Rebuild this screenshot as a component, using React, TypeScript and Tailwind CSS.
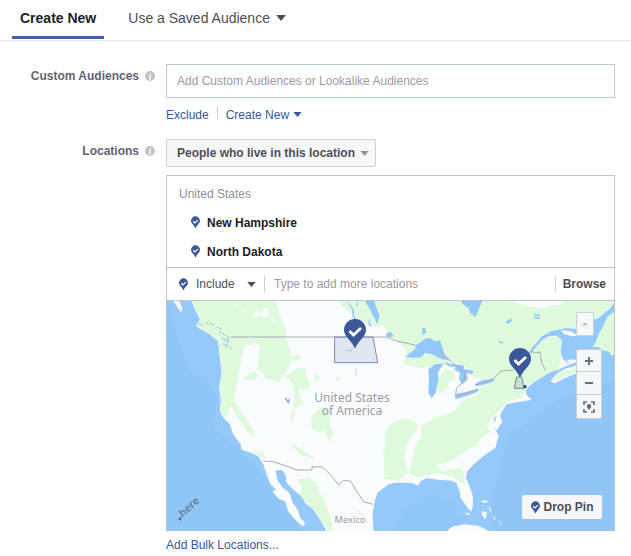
import type { ReactNode } from "react";

const LINK = "text-xs leading-4 text-[#365899]";

function Pin({ className }: { className: string }) {
  return (
    <svg viewBox="0 0 22 30" className={className} aria-hidden="true">
      <PinShape />
    </svg>
  );
}

function PinShape() {
  return (
    <>
      <path d="M11 0a11 11 0 0 1 11 11c0 6.500-6.500 9-11 18.500C6.500 20 0 17.500 0 11A11 11 0 0 1 11 0z" fill="#3b5998" />
      <path d="M5.500 12l4 4 7.500-7" fill="none" stroke="#fff" strokeWidth="2.800" />
    </>
  );
}

function Caret({ className }: { className: string }) {
  return (
    <svg viewBox="0 0 10 6" className={className} aria-hidden="true">
      <path d="M0 0h10L5 6z" fill="currentColor" />
    </svg>
  );
}

function Info() {
  return (
    <svg viewBox="0 0 10 10" className="size-[10px] shrink-0" aria-hidden="true">
      <circle cx="5" cy="5" r="5" fill="#bec3c9" />
      <path d="M5.400 2v1.300M4 4.600h1.200L4.700 7.800h1.100" fill="none" stroke="#fff" strokeWidth="1.200" />
    </svg>
  );
}

function Row({ label, htmlFor, children }: { label: string; htmlFor: string; children: ReactNode }) {
  return (
    <div className="flex gap-[11px]">
      <div className="flex h-6 w-[155px] shrink-0 items-center justify-end gap-[6px]">
        <label htmlFor={htmlFor} className="text-xs font-bold text-[#5f6470]">
          {label}
        </label>
        <Info />
      </div>
      <div className="min-w-0 flex-1">{children}</div>
    </div>
  );
}

/* The map is drawn as two halves; the eastern one has its own origin. */
const EAST = "translate(654 0)";

function MapArt() {
  return (
    <svg
      viewBox="0 0 1341 690"
      preserveAspectRatio="xMidYMid slice"
      className="block h-full w-full"
      role="img"
      aria-label="Map of the United States"
    >
      <rect x="-1500" width="4500" height="690" fill="#94c9fa" />
      <path d="M-1500 0H0L30 100 60 200 120 240 150 290 140 380 210 440 280 510 330 590 390 670 400 690H-1500z" fill="#8fc4f5" opacity=".7" />
      <g transform={EAST}>
        <path d="M30 690L60 620 110 590 160 580 210 610 240 660 250 690z" fill="#8bc1f3" opacity=".35" />
        <path d="M330 690L320 600 350 480 370 400 420 370 530 290 690 240H2000V690z" fill="#8fc4f5" opacity=".8" />
      </g>

      {/* Land */}
      <g fill="#f9fbfd" stroke="#f9fbfd" strokeWidth="3" strokeLinejoin="round">
        <path d="M75 0L88 30 100 55 95 68 88 75 130 100 155 122 160 170 165 215 158 260 163 300 160 330 170 350 190 370 200 400 222 430 225 445 255 455 275 465 290 490 300 520 312 550 330 568 318 572 335 592 355 600 365 630 385 655 408 675 413 665 398 650 392 628 375 605 365 575 345 560 330 535 325 510 345 507 355 520 360 545 385 570 405 585 415 605 440 625 460 655 480 690H618L615 640 622 600 630 575 665 548 690 543V0z" />
        <path d="M20 0L42 32 45 24 36 0z" />
        <g transform={EAST}>
          <path d="M0 0V545L30 543 80 545 100 552 105 540 125 530 160 535 200 538 215 545 225 570 228 590 245 615 258 630 263 610 261 580 250 550 241 530 246 510 270 485 300 460 330 440 335 420 340 405 330 385 325 350 335 345 350 330 365 308 410 300 438 295 425 285 420 270 430 255 450 240 475 225 498 210 520 205 540 195 572 182 545 188 530 170 525 150 530 120 515 105 490 108 470 120 455 135 440 150 435 145 450 128 470 105 500 88 540 80 585 82 600 65 640 50 675 20 690 0z" />
          <path d="M498 240L515 220 540 205 575 195 610 180 600 202 575 215 540 230 508 246z" />
        </g>
      </g>

      {/* Forests */}
      <g fill="#dff9dc">
        <path d="M75 0H325L340 45 355 80 358 110 370 150 372 180 360 210 350 222 335 245 318 236 300 235 286 216 270 205 275 165 278 135 265 125 250 132 235 130 225 160 218 195 215 220 205 270 200 295 225 335 255 380 268 412 240 390 205 340 190 310 185 335 175 350 160 330 163 300 158 260 165 215 160 170 155 122 130 100 88 75 100 55z" />
        <path d="M225 235L260 210 275 225 262 238zM370 165L395 158 403 172 375 180zM355 225L385 205 415 198 418 225 432 255 410 270 395 262 400 290 412 310 385 320 378 362 368 354 380 320 385 275 374 245zM440 213L455 225 458 240 445 238zM508 230L520 226 518 240 508 242z" />
        <path d="M435 345L460 320 490 330 488 372 500 395 485 425 475 388 460 395 432 380zM370 428L400 442 445 475 400 462zM393 535L425 532 450 545 455 570 475 600 490 650 500 690H485L455 650 430 615 400 585 405 560zM565 620L582 637 578 642zM245 448L288 456 300 475 270 460z" />
        <path d="M515 0H690V110L670 100 650 72 625 78 590 65 555 40 530 20z" />
        <path d="M690 355L680 400 650 450 652 535 690 533z" />
        <g transform={EAST}>
          <path d="M0 0H690L675 20 640 50 600 65 585 82 540 80 500 88 470 105 450 128 435 145 440 152 470 122 490 108 515 105 530 120 525 150 530 172 520 203 475 225 430 250 418 275 410 290 365 303 345 325 325 345 305 372 318 392 290 410 270 435 225 462 190 482 150 495 175 510 225 500 236 515 240 550 225 545 200 525 160 515 100 528 72 518 80 480 90 440 107 405 108 375 150 350 210 330 235 300 280 278 285 255 310 240 260 228 240 195 200 178 175 195 110 200 55 190 65 165 60 140 35 122 18 108 0 78z" />
          <path d="M20 365L60 350 95 365 97 385 68 420 58 470 68 515 40 540 0 533V395zM158 230L185 202 205 212 212 235 190 243 188 260 165 278 155 260z" />
          <path d="M500 240L515 222 540 208 575 200 575 212 540 228z" />
          <path d="M622 138L632 125 640 100 655 75 665 50 682 35 700 30V150L680 165 672 152 650 148 640 138z" />
        </g>
      </g>
      <g fill="#f9fbfd">
        <path d="M255 42L270 30 280 36 290 22 303 20 306 42 290 52 282 44 266 50z" />
        <path d="M228 24L234 30 229 34zM205 10h6v6zM318 56l8 4-5 6z" />
        <g transform={EAST}>
          <path d="M375 0H540L520 14 500 12 470 22 440 18 405 10zM528 86L560 92 580 104 560 106 535 98zM540 182L556 174 575 178 570 186zM335 345L362 308 345 345 352 362 335 388 326 372z" />
          <path d="M188 687L205 676 240 670 280 674 305 686 310 695H188zM285 600L300 598 310 602 300 606zM292 630L306 634 302 655 290 642zM308 614L318 625 320 640zM322 642L332 655 328 658zM336 655L350 668 352 676zM240 632L258 640 246 642z" />
        </g>
      </g>

      {/* Lakes */}
      <g fill="#92c8f9">
        <path d="M538 0L550 12 562 26 560 44 572 58 575 72 566 60 556 46 556 26zM568 0L574 14 568 16zM594 0H622L628 20 638 45 630 70 622 50 608 25zM604 52L614 78 606 74zM655 100L670 92 680 105 665 110z" />
        <path d="M326 508L346 508 356 524 358 552 344 556 332 536z" />
        <g transform={EAST}>
          <path d="M60 168L90 145 95 130 110 122 118 114 134 110 150 122 165 118 175 150 180 165 195 178 170 175 140 160 120 155 110 168 85 170zM130 205L150 190 175 188 165 205 158 215 160 235 152 275 140 292 130 275 132 240zM175 183L200 190 235 193 238 204 265 210 262 220 245 215 248 235 232 250 222 235 225 215 205 205 215 200 190 195zM208 288L215 278 245 272 280 262 278 272 245 285 215 294zM270 250L285 240 325 232 328 240 300 250 275 256z" />
          <path d="M228 0H292L283 20 272 48 255 35 250 20 232 8zM111 82L121 80 124 94 113 102zM362 62L378 52 382 58 368 70zM340 120L352 122 356 127 344 127zM448 38h16v16h-16zM145 118l8 2-4 4z" />
        </g>
      </g>
      <path transform={EAST} d="M452 40h8M450 47h12" stroke="#dff9dc" strokeWidth="3" />
      <g fill="none" stroke="#7aa9dc" strokeWidth="3">
        <path d="M118 66L142 72M150 78L166 86M158 92L184 108M164 112L190 122M168 128L186 136 194 146M184 110L176 140M96 68L108 74" strokeDasharray="5 4" />
        <path d="M355 291L364 304 368 294" strokeWidth="4" />
        <path d="M535 148L552 150 556 142M568 202L566 222" strokeWidth="2" opacity=".7" />
      </g>
      <path transform={EAST} d="M404 170L440 150 470 114 500 94" fill="none" stroke="#94c9fa" strokeWidth="5" />

      {/* National borders */}
      <g fill="none" stroke="#a9a9bb" strokeWidth="3">
        <path d="M190 108H658" />
        <path d="M288 480L320 482 390 507 435 507 435 497 465 498 490 520 515 552 530 538 550 540 575 580 590 602 618 610" />
        <g transform={EAST}>
          <path d="M4 108L35 120 60 125 95 134M165 148L200 184 222 198 240 218 238 240 214 262 212 284M216 284L280 266M270 252L322 238 345 212 365 208 385 208M430 166L440 152 452 156 465 153 470 185 482 208" />
        </g>
      </g>

      {/* Selected states */}
      <path d="M503 108H618L632 185H503z" fill="#3b5998" fillOpacity=".13" stroke="#8089b3" strokeWidth="3" />
      <g transform={EAST}>
        <path d="M395 228H410L417 262H388z" fill="#3b5998" fillOpacity=".14" stroke="#6f8194" strokeWidth="3" />
        <circle cx="420" cy="257" r="5" fill="#24486f" />
      </g>
      <g transform="translate(531 54) scale(3)">
        <PinShape />
      </g>
      <g transform="translate(1026 141) scale(3)">
        <PinShape />
      </g>

      <g className="font-['Noto_Sans',sans-serif]" fill="#9a9ca6" textAnchor="middle">
        <text fontSize="36">
          <tspan x="555" y="303">United States</tspan>
          <tspan x="555" y="342">of America</tspan>
        </text>
        <text x="549" y="665" fontSize="28">Mexico</text>
      </g>
      <g transform="translate(44 652) rotate(-42)" fill="#617c99">
        <path d="M-12-6H4L-4 5z" />
        <text x="4" y="0" fontSize="32" className="font-['Noto_Sans',sans-serif] font-semibold">here</text>
      </g>
    </svg>
  );
}

const MAP_BUTTON = "flex items-center justify-center bg-[#f6f7f9] text-[#6a6e75]";

function LocationMap() {
  return (
    <div className="relative h-[230px] overflow-hidden">
      <MapArt />
      <button
        type="button"
        aria-label="Collapse map"
        className={`${MAP_BUTTON} absolute right-5 top-[11px] h-6 w-[18px] rounded-xs border border-[#c9cdd6]`}
      >
        <svg viewBox="0 0 6 4" className="h-1 w-[6px]">
          <path d="M1 3.500l2-2 2 2" fill="none" stroke="currentColor" />
        </svg>
      </button>
      <div className="absolute right-3 top-12 w-[26px] divide-y divide-[#c9cdd6] rounded-xs border border-[#c9cdd6]">
        <button type="button" aria-label="Zoom in" className={`${MAP_BUTTON} h-[22px] w-full`}>
          <svg viewBox="0 0 8 8" className="size-2">
            <path d="M4 0v8M0 4h8" stroke="currentColor" strokeWidth="2" />
          </svg>
        </button>
        <button type="button" aria-label="Zoom out" className={`${MAP_BUTTON} h-[23px] w-full`}>
          <svg viewBox="0 0 8 8" className="size-2">
            <path d="M0 4h8" stroke="currentColor" strokeWidth="2" />
          </svg>
        </button>
        <button type="button" aria-label="Fit to locations" className={`${MAP_BUTTON} h-[23px] w-full`}>
          <svg viewBox="0 0 12 12" className="size-3">
            <path d="M1 4V1h3M8 1h3v3M11 8v3H8M4 11H1V8" fill="none" stroke="currentColor" strokeWidth="1.700" />
            <path d="M6 3a2.300 2.300 0 0 1 2.300 2.300C8.300 7 6.800 7.500 6 9.200 5.200 7.500 3.700 7 3.700 5.300A2.300 2.300 0 0 1 6 3z" fill="currentColor" />
          </svg>
        </button>
      </div>
      <button
        type="button"
        className="absolute bottom-3 right-3 flex h-6 w-20 items-center justify-center gap-1 rounded-xs bg-[#f6f7f9] text-xs font-bold text-[#4b4f56]"
      >
        <Pin className="h-[13px] w-[9px]" />
        Drop Pin
      </button>
    </div>
  );
}

export default function App() {
  return (
    <main className="bg-white pb-1 font-['Liberation_Sans',Arial,sans-serif]">
      <nav className="flex h-[41px] items-start gap-6 border-b border-[#e3e4e8] px-3">
        <button type="button" className="h-[39px] border-b-3 border-[#4560a0] px-2 text-sm font-bold text-[#1d2129]">
          Create New
        </button>
        <button type="button" className="flex h-9 items-center gap-[6px] text-sm text-[#4b4f56]">
          Use a Saved Audience
          <Caret className="h-[6px] w-[10px]" />
        </button>
      </nav>

      <form className="flex flex-col gap-4 pr-4 pt-[23px]">
        <Row label="Custom Audiences" htmlFor="audiences">
          <input
            id="audiences"
            type="text"
            placeholder="Add Custom Audiences or Lookalike Audiences"
            className="block h-[34px] w-full border border-[#bdc7d0] px-[10px] text-xs outline-none placeholder:text-[#999ba1]"
          />
          <div className="mt-2 flex h-[17px] items-center">
            <button type="button" className={LINK}>
              Exclude
            </button>
            <span className="mx-2 h-[13px] w-px self-start bg-[#ced0d4]" />
            <button type="button" className={`flex items-center gap-1 ${LINK}`}>
              Create New
              <Caret className="h-[5px] w-[9px]" />
            </button>
          </div>
        </Row>

        <Row label="Locations" htmlFor="scope">
          <div className="relative w-[210px]">
            <select
              id="scope"
              className="block h-7 w-full appearance-none rounded-xs border border-[#ced0d4] bg-[#f6f7f9] pl-[10px] text-xs font-bold text-[#4b4f56]"
            >
              <option>People who live in this location</option>
            </select>
            <Caret className="pointer-events-none absolute right-[7px] top-3 h-[5px] w-[9px] text-[#90949c]" />
          </div>

          <div className="mt-2 border-x border-t border-[#bdc2cb]">
            <div className="pb-[1px] pt-[3px]">
              <h2 className="flex h-[29px] items-center pl-3 text-xs text-[#8b8f97]">United States</h2>
              <ul>
                {["New Hampshire", "North Dakota"].map((name) => (
                  <li key={name} className="flex h-[29px] items-center gap-[7px] pl-6 text-xs font-bold text-[#1d2129]">
                    <Pin className="h-[13px] w-[9px]" />
                    {name}
                  </li>
                ))}
              </ul>
            </div>
            <div className="flex h-[34px] items-center border-y border-[#bdc2cb]">
              <div className="relative flex items-center gap-2 pl-3">
                <Pin className="h-[13px] w-[9px]" />
                <select aria-label="Include or exclude" className="w-[60px] appearance-none text-xs text-[#4b4f56]">
                  <option>Include</option>
                  <option>Exclude</option>
                </select>
                <Caret className="pointer-events-none absolute right-0 top-[6px] h-[5px] w-[9px] text-[#4b4f56]" />
              </div>
              <span className="ml-2 h-4 w-px bg-[#ced0d4]" />
              <input
                type="text"
                aria-label="Add locations"
                placeholder="Type to add more locations"
                className="min-w-0 flex-1 px-[9px] text-xs outline-none placeholder:text-[#999ba1]"
              />
              <button type="button" className="h-[14px] border-l border-[#ced0d4] pl-[7px] pr-2 text-xs leading-[14px] font-bold text-[#4b4f56]">
                Browse
              </button>
            </div>
            <LocationMap />
          </div>
          <a href="#bulk" className={`mt-[6px] inline-block ${LINK}`}>
            Add Bulk Locations...
          </a>
        </Row>
      </form>
    </main>
  );
}
